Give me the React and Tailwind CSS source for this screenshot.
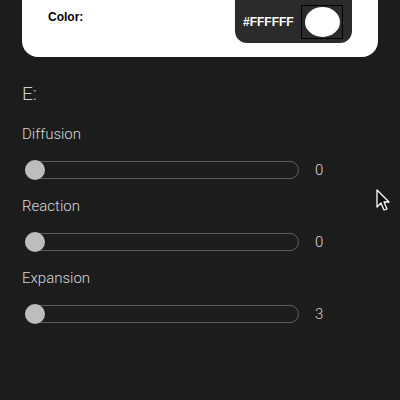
import React from 'react';

const sliders = [
  { label: 'Diffusion', value: 0 },
  { label: 'Reaction', value: 0 },
  { label: 'Expansion', value: 3 },
];

const Slider = ({ label, value }) => (
  <div className="h-[72px]">
    <div className="h-[34px] flex items-center text-[15px] text-[#d8d8d8] font-light leading-none">{label}</div>
    <div className="flex items-center h-[20px] mt-[9px]">
      <div className="relative w-[274px] h-[18px] ml-[3px] rounded-full border border-[#5c5c5c]">
        <div className="absolute left-[-1px] top-[-2px] w-[20px] h-[20px] rounded-full bg-[#bdbdbd]" />
      </div>
      <span className="ml-[16px] text-[15px] text-[#d8d8d8] font-light leading-none">{value}</span>
    </div>
  </div>
);

const App = () => {
  return (
    <div className="relative w-[400px] h-[400px] overflow-hidden bg-[#1c1c1c]" style={{ fontFamily: 'Roboto, "Liberation Sans", sans-serif' }}>
      {/* colour card */}
      <div className="mx-[22px] h-[57px] bg-white rounded-b-[16px] flex justify-between pl-[26px] pr-[26px]">
        <div className="pt-[8px] text-[12px] font-bold text-black" style={{ fontFamily: '"Liberation Sans", sans-serif' }}>Color:</div>
        <div className="w-[117px] h-[43px] bg-[#2b2b2b] rounded-b-[12px] flex items-center pl-[8px] pr-[9px] justify-between">
          <span className="text-[12px] font-bold text-white" style={{ fontFamily: '"Liberation Sans", sans-serif' }}>#FFFFFF</span>
          <div className="w-[42px] h-[34px] border border-black flex items-center justify-center">
            <div className="w-[35px] h-[30px] rounded-[50%] bg-white" />
          </div>
        </div>
      </div>

      <div className="px-[22px]">
        <div className="mt-[24px] h-[24px] flex items-center text-[19px] font-light text-[#cfcfcf] leading-none">E:</div>
        <div className="mt-[12px]">
          {sliders.map((s) => (
            <Slider key={s.label} label={s.label} value={s.value} />
          ))}
        </div>
      </div>

      {/* mouse pointer */}
      <svg className="absolute left-[376px] top-[189px]" width="16" height="24" viewBox="0 0 16 24">
        <path d="M1 1 L1 18 L5 14 L8 21 L11 20 L8 13 L13 13 Z" fill="#111" stroke="#fff" strokeWidth="1.3" strokeLinejoin="round" />
      </svg>
    </div>
  );
};

export default App;
